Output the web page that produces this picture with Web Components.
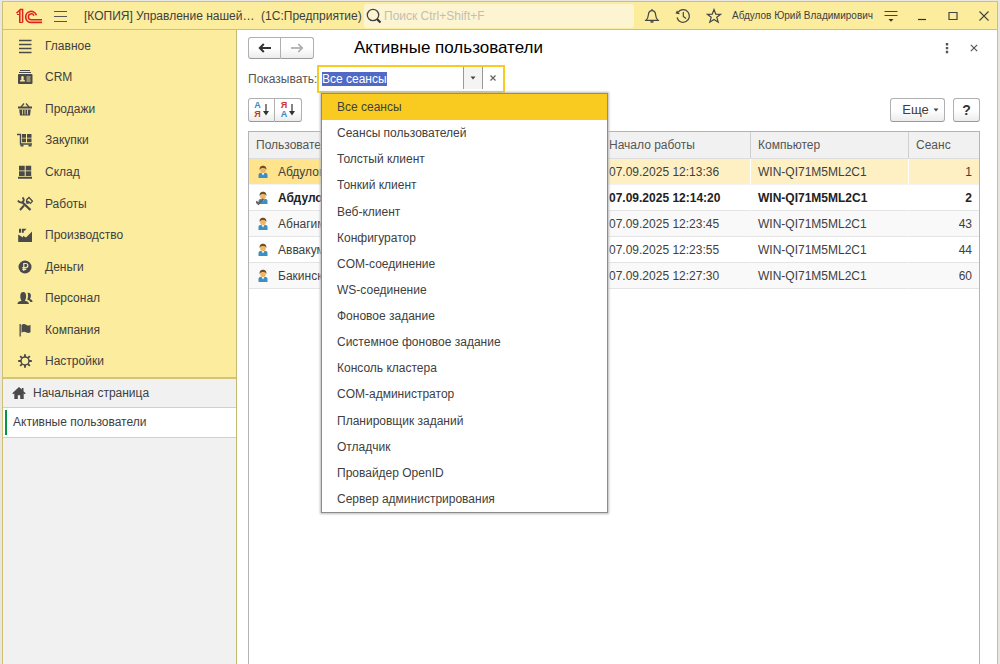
<!DOCTYPE html>
<html lang="ru">
<head>
<meta charset="utf-8">
<title>Активные пользователи</title>
<style>
html, body { margin: 0; height: 100%; }
body { font: 12px/16px "Liberation Sans", Arial, sans-serif; color: #404040; background: #e9e7e0; }
</style>
</head>
<body>
<app-window></app-window>

<script>
const ICONS = {
  logo: ['0 0 28 16', '<g fill="none" stroke="#e0231c"><path d="M1.5 5.2 4.8 2v12.5M7.6 14.5V1.6H5" stroke-width="1.5"/><path d="M2 6.5h2.5v8h3.1" stroke-width="1"/><path d="M21.4 7.200a5.500 5.500 0 1 0-5.200 7.200H27" stroke-width="1.700"/><path d="M19 7.800a2.900 2.900 0 1 0-2.800 3.900H27" stroke-width="1.500"/></g>'],
  burger: ['0 0 14 12', '<path d="M0 1.5h13M0 6.5h13M0 11.5h13" stroke="#555" fill="none"/>'],
  search: ['0 0 16 16', '<circle cx="7" cy="7" r="5.7" fill="none" stroke="#444" stroke-width="1.3"/><path d="m11 11 3.500 3.500" stroke="#333" stroke-width="2.200"/>'],
  bell: ['0 0 16 16', '<path d="M2 12.3c2-1.8 2.2-3 2.4-5.6C4.600 4 6 2.600 8 2.600s3.400 1.400 3.600 4.100c.2 2.600.4 3.800 2.400 5.600zM8 2.600V1" fill="none" stroke="#444" stroke-width="1.2"/><path d="M6.200 13.200h3.600a1.800 1.500 0 0 1-3.600 0z" fill="#333"/>'],
  history: ['0 0 16 16', '<path d="M3 4.300A6.300 6.300 0 1 1 2 9.500" fill="none" stroke="#444" stroke-width="1.200"/><path d="M8.300 4v4.500l2.800 2" fill="none" stroke="#444" stroke-width="1.200"/><path d="M.5 5.600 5 6.200 2 2.400z" fill="#444"/>'],
  star: ['0 0 16 16', '<path d="m8 1.500 1.800 4.600 4.900.2-3.900 3 1.400 4.900L8 11.400l-4.200 2.800 1.400-4.900-3.900-3 4.900-.2z" fill="none" stroke="#444" stroke-width="1.200"/>'],
  panel: ['0 0 14 14', '<path d="M.5 2.500h13M.5 6.500h13" stroke="#444" stroke-width="1.200"/><path d="M4.500 10h5L7 12.800z" fill="#333"/>'],
  minimize: ['0 0 12 12', '<path d="M2 9.500h8" stroke="#333" stroke-width="1.200"/>'],
  maximize: ['0 0 12 12', '<path d="M2 2.500h8v7H2z" fill="none" stroke="#444" stroke-width="1.200"/>'],
  close: ['0 0 12 12', '<path d="m1.500 1.500 9 9m0-9-9 9" stroke="#444" stroke-width="1.100"/>'],
  main: ['0 0 16 16', '<path d="M2 2.500h12.500M2 6.500h12.500M2 10.500h12.500M2 14.500h12.500" stroke="#4a4a4a" stroke-width="1.700"/>'],
  crm: ['0 0 16 16', '<path d="M3 1.500h10M2 3.500h12" stroke="#4a4a4a"/><rect x="1" y="5" width="14.500" height="10" rx="1" fill="#4a4a4a"/><path d="M3 12.500c0-1.600.8-1.700 1.600-2C3.800 8.500 4.200 7 5.500 7s1.700 1.500.9 3.500c.8.300 1.600.4 1.600 2z" fill="#f9e99c"/><path d="M9.500 8h4M9.500 10h4M9.500 12h4" stroke="#f9e99c" stroke-width=".9"/>'],
  sales: ['0 0 16 16', '<path d="M1 5.500h14v2H1zM2.200 8.500h11.600L13 14.500H3z" fill="#4a4a4a"/><path d="m4 6 3-3.500M12 6 9 2.500" stroke="#4a4a4a" stroke-width="1.200"/><path d="M5.500 8.500v5M8 8.500v5M10.500 8.500v5" stroke="#f9e99c" stroke-width=".8"/>'],
  purchases: ['0 0 16 16', '<path d="M0 2.500h3.500v9.500H15" fill="none" stroke="#4a4a4a" stroke-width="1.400"/><path d="M5 2h4v3.700H5zM10 2h4.500v3.700H10zM5 6.500h4v3.700H5zM10 6.500h4.500v3.700H10z" fill="#4a4a4a"/><path d="M3.500 12.500h3v2h-3zM11.500 12.500h3v2h-3z" fill="#4a4a4a"/>'],
  stock: ['0 0 16 16', '<path d="M2 1.800h5.700v4.700H2zM8.700 1.800h5.500v4.700H8.700zM2 7.300h5.700v4.700H2zM8.700 7.300h5.500v4.700H8.700zM1 12.800h14v1.900H1z" fill="#4a4a4a"/>'],
  works: ['0 0 16 16', '<path d="m5 6 8.500 8" stroke="#4a4a4a" stroke-width="2.400"/><path d="M1 4.500c1 2 3.500 2.800 5 1.200S6.600 2.500 5.500 1.500M3 14l4-4.500M9.500 7.500l2-2.500" stroke="#4a4a4a" stroke-width="1.900" fill="none"/><path d="M9.700 3.800 12 1.500l3.500 3.700-2 2.200-1-1-1.500.7-1.500-1.500z" fill="none" stroke="#4a4a4a" stroke-width="1.300"/>'],
  production: ['0 0 16 16', '<path d="M1.200 15V7.500L6 10.500V8.800l3 1.800 6-6V15z" fill="#4a4a4a"/><path d="M2 1.800h2.200v4H2zM5 1.800h4.500L7.800 3.800H6.800v2H5z" fill="#4a4a4a"/>'],
  money: ['0 0 16 16', '<circle cx="8" cy="8" r="6.500" fill="#4a4a4a"/><path d="M6.800 12V4.500h2a2 2 0 0 1 0 4.100H5.300M5.300 10.300h4" fill="none" stroke="#f9e99c" stroke-width="1.200"/>'],
  staff: ['0 0 16 16', '<path d="M.5 14c0-2.300 1.500-2.500 4-3.300C3.400 9 3.200 7.500 3.300 5.500 3.400 3 4.500 2 6.200 2S9 3 9.100 5.500c.1 2-.1 3.500-1.200 5.200 2.500.8 4 1 4 3.300z" fill="#4a4a4a"/><path d="M10.500 2.800c2.400-.5 3.600 1 3.400 3-.1 1.700-.5 2.500-1 3.200 1.700.6 2.600 1 2.600 3h-2.300c-.3-1.200-1.500-1.900-3-2.400 1-1.700 1.100-4.800.3-6.800z" fill="#4a4a4a"/>'],
  company: ['0 0 16 16', '<path d="M2.500 2h1.300v12.500H2.500z" fill="#4a4a4a"/><path d="M4.500 3c2-1.500 3.500-.8 5 0s2.500.8 4-.3v7.600c-1.500 1-2.700 1-4 .3s-3-1.300-5 .1z" fill="#4a4a4a"/>'],
  settings: ['0 0 16 16', '<circle cx="8" cy="8" r="4" fill="none" stroke="#4a4a4a" stroke-width="1.500"/><path d="M8 1.200V4M8 12v2.800M1.200 8H4M12 8h2.800M3.200 3.200l2 2M10.800 10.800l2 2M12.800 3.200l-2 2M5.200 10.800l-2 2" stroke="#4a4a4a" stroke-width="1.900"/>'],
  home: ['0 0 14 14', '<path d="M7 1 .3 7.300l.9 1L2.300 7.500V13h3.500V9.200h2.400V13h3.500V7.500l1.100.8.900-1L11.500 5.200V2H9.800v1.600z" fill="#4a4a4a"/>'],
  back: ['0 0 14 10', '<path d="M3 5h10" stroke="#333" stroke-width="2"/><path d="M5.800 1 1.800 5l4 4" fill="none" stroke="#333" stroke-width="2"/>'],
  forward: ['0 0 14 10', '<path d="M1 5h10" stroke="#aaa" stroke-width="1.700"/><path d="m8.200 1 4 4-4 4" fill="none" stroke="#aaa" stroke-width="1.700"/>'],
  dots: ['0 0 4 12', '<path d="M.8 1h2.400v2.400H.8zM.8 4.900h2.400v2.400H.8zM.8 8.800h2.400v2.400H.8z" fill="#555"/>'],
  cross: ['0 0 8 8', '<path d="m.8.8 6.400 6.400m0-6.400L.8 7.200" stroke="#555" stroke-width="1.200"/>'],
  clear: ['0 0 8 8', '<path d="m1.500 1.500 5 5m0-5-5 5" stroke="#666" stroke-width="1.300"/>'],
  caret: ['0 0 8 8', '<path d="M1.500 2.500h5L4 5.500z" fill="#444"/>'],
  sortArrow: ['0 0 6 12', '<path d="M3 0v10" stroke="#333" stroke-width="1.200"/><path d="M0 7h6L3 11.500z" fill="#333"/>'],
  user: ['0 0 14 14', '<path d="M2.500 13V10c0-1.500 1-2 2.500-2h4c1.500 0 2.500.5 2.500 2v3z" fill="#3c8fc4"/><path d="M5.500 8h3L7 10.500z" fill="#fff"/><ellipse cx="7" cy="5" rx="2.900" ry="3.300" fill="#efb667"/><path d="M3.600 5C3.300 1.800 5 .8 7 .8s3.700 1 3.400 4.200C9.800 3.500 8.500 3 7 3s-2.800.5-3.400 2z" fill="#6d4f2c"/>'],
};
ICONS.userSelf = [ICONS.user[0], ICONS.user[1] + '<path d="m0 10.500 2.500 2.300L7.500 8" fill="none" stroke="#666" stroke-width="2.200"/>'];

function define(name, css, html, setup) {
  const template = document.createElement('template');
  template.innerHTML = `<style>*{box-sizing:border-box}button{font:inherit;color:inherit;margin:0}${css}</style>` + html;
  customElements.define(name, class extends HTMLElement {
    constructor() {
      super();
      this.attachShadow({ mode: 'open' }).append(template.content.cloneNode(true));
    }
    connectedCallback() { if (setup) setup(this, this.shadowRoot); }
  });
}

define('ui-icon', ':host{display:inline-flex;flex:none;width:16px;height:16px}svg{width:100%;height:100%;display:block}', '<div style="display:contents"></div>', (el, root) => {
  const [box, body] = ICONS[el.getAttribute('name')];
  root.querySelector('div').innerHTML = `<svg viewBox="${box}" aria-hidden="true">${body}</svg>`;
});

define('title-bar', `
  :host{display:flex;align-items:center;gap:5px;height:28px;background:#fbec9e;border-bottom:1px solid #cfc077;padding-left:12px}
  button{flex:none;border:0;background:none;padding:0;display:flex;align-items:center;justify-content:center;width:26px;height:26px}
  .logo{width:28px}
  .burger ui-icon{width:14px;height:12px}
  .caption{margin-left:5px;white-space:pre;width:275px}
  label{flex:1;min-width:0;display:flex;align-items:center;height:24px;background:#fdf5d2;border-radius:3px;padding-left:2px;gap:2px}
  input{flex:1;min-width:0;border:0;background:none;padding:0;outline:0;font:inherit;color:#404040}
  input::placeholder{color:#c4beb0;opacity:1}
  .name{font-size:10px;white-space:nowrap}
  .win ui-icon{width:12px;height:12px}
  .panel ui-icon{width:14px;height:14px}`,
  `<ui-icon class="logo" name="logo"></ui-icon>
  <button class="burger" aria-label="Меню"><ui-icon name="burger"></ui-icon></button>
  <span class="caption">[КОПИЯ] Управление нашей…  (1С:Предприятие)</span>
  <label><ui-icon name="search"></ui-icon><input type="search" placeholder="Поиск Ctrl+Shift+F" aria-label="Поиск"></label>
  <button aria-label="Оповещения"><ui-icon name="bell"></ui-icon></button>
  <button aria-label="История"><ui-icon name="history"></ui-icon></button>
  <button aria-label="Избранное"><ui-icon name="star"></ui-icon></button>
  <span class="name">Абдулов Юрий Владимирович</span>
  <button class="panel" aria-label="Сервис"><ui-icon name="panel"></ui-icon></button>
  <button class="win" aria-label="Свернуть"><ui-icon name="minimize"></ui-icon></button>
  <button class="win" aria-label="Развернуть"><ui-icon name="maximize"></ui-icon></button>
  <button class="win" aria-label="Закрыть"><ui-icon name="close"></ui-icon></button>`);

define('nav-item', `
  :host{display:flex;flex:1}
  a{flex:1;display:flex;align-items:center;gap:12px;padding-left:14px;color:inherit;text-decoration:none}`,
  '<a href="#"><slot></slot></a>',
  (el, root) => {
    const icon = document.createElement('ui-icon');
    icon.setAttribute('name', el.getAttribute('icon'));
    root.querySelector('a').prepend(icon);
  });

define('side-bar', `
  :host{display:flex;flex-direction:column;flex:none;width:234px;background:#f1f1f1;border-right:1px solid #c5b870}
  nav{display:flex;flex-direction:column;height:349px;background:#fbec9e;border-bottom:2px solid #d2c47c}
  .tab{display:flex;align-items:center;height:30px;color:inherit;text-decoration:none;border-bottom:1px solid #d0d0d0}
  .home{gap:7px;padding-left:9px;height:29px}
  .home ui-icon{width:14px;height:14px}
  .active{background:#fff;padding:2px 0 2px 2px}
  .active span{border-left:2px solid #009646;height:25px;line-height:25px;padding-left:6px}`,
  `<nav>
    <nav-item icon="main">Главное</nav-item><nav-item icon="crm">CRM</nav-item>
    <nav-item icon="sales">Продажи</nav-item><nav-item icon="purchases">Закупки</nav-item>
    <nav-item icon="stock">Склад</nav-item><nav-item icon="works">Работы</nav-item>
    <nav-item icon="production">Производство</nav-item><nav-item icon="money">Деньги</nav-item>
    <nav-item icon="staff">Персонал</nav-item><nav-item icon="company">Компания</nav-item>
    <nav-item icon="settings">Настройки</nav-item>
  </nav>
  <a class="tab home" href="#"><ui-icon name="home"></ui-icon>Начальная страница</a>
  <a class="tab active" href="#" aria-current="page"><span>Активные пользователи</span></a>`);

define('list-option', `
  :host{flex:1;display:flex;align-items:center;padding-left:15px}
  :host([aria-selected=true]){background:#f9cb20}`, '<slot></slot>',
  el => el.setAttribute('role', 'option'));

define('session-filter', `
  :host{display:flex;align-items:center;position:relative;height:28px;color:#555}
  label{width:69px;white-space:nowrap}
  .box{display:flex;width:188px;height:28px;border:2px solid #f9cb20;background:#fff}
  input{flex:1;min-width:0;height:24px;border:0;outline:0;padding:0 0 0 3px;font:inherit;color:#404040;caret-color:transparent}
  input::selection{background:#5069c6;color:#fff}
  button{border:0;background:#fff;width:20px;height:22px;padding:0;display:flex;align-items:center;justify-content:center}
  .drop{background:#f4f4f4;border:solid #999;border-width:0 1px}
  ui-icon{width:8px;height:8px}
  .list{position:absolute;z-index:2;left:73px;top:28px;width:287px;height:420px;display:flex;flex-direction:column;background:#fff;border:1px solid #8c8c8c;box-shadow:0 0 2px 1px #bbb;color:#404040}`,
  `<label for="kind">Показывать:</label>
  <div class="box"><input id="kind" role="combobox" aria-expanded="true" value="Все сеансы">
  <button class="drop" aria-label="Выбрать"><ui-icon name="caret"></ui-icon></button>
  <button class="clear" aria-label="Очистить"><ui-icon name="clear"></ui-icon></button></div>
  <div class="list" role="listbox" aria-label="Показывать">
    <list-option aria-selected="true">Все сеансы</list-option>
    <list-option>Сеансы пользователей</list-option>
    <list-option>Толстый клиент</list-option>
    <list-option>Тонкий клиент</list-option>
    <list-option>Веб-клиент</list-option>
    <list-option>Конфигуратор</list-option>
    <list-option>COM-соединение</list-option>
    <list-option>WS-соединение</list-option>
    <list-option>Фоновое задание</list-option>
    <list-option>Системное фоновое задание</list-option>
    <list-option>Консоль кластера</list-option>
    <list-option>COM-администратор</list-option>
    <list-option>Планировщик заданий</list-option>
    <list-option>Отладчик</list-option>
    <list-option>Провайдер OpenID</list-option>
    <list-option>Сервер администрирования</list-option>
  </div>`,
  (el, root) => { const input = root.querySelector('input'); input.focus(); input.select(); });

define('sessions-table', `
  :host{display:block;flex:1;border:1px solid #b4b4b4;border-bottom:0;background:#fff;overflow:hidden}
  table{width:100%;border-collapse:separate;border-spacing:0;table-layout:fixed}
  th,td{padding:0 7px;text-align:left;white-space:nowrap;overflow:hidden}
  th{height:27px;font-weight:400;color:#555;background:#f1f1f1;border-right:1px solid #cfcfcf;border-bottom:1px solid #ddd}
  th:last-child,td:last-child{border-right:0}
  td{height:26px;border-bottom:1px solid #e4e4e4;border-right:1px solid transparent}
  tr:nth-child(odd) td{background:#f9f9f9}
  .selected td:nth-child(n){background:#fef0c3;border-right-color:#fff;border-bottom-color:#f2f2f2}
  .selected td:first-child{background:#ffe48d}
  .me td{font-weight:700;color:#222}
  td:last-child{text-align:right}
  td div{display:flex;align-items:center;gap:8px}
  ui-icon{width:14px;height:14px}
  .start{width:149px}.pc{width:158px}.no{width:70px}`,
  `<table><thead><tr><th>Пользователь</th><th class="start">Начало работы</th><th class="pc">Компьютер</th><th class="no">Сеанс</th></tr></thead><tbody></tbody></table>`,
  (el, root) => {
    const rows = [
      ['Абдулов', '07.09.2025 12:13:36', 1, 'selected'],
      ['Абдулов', '07.09.2025 12:14:20', 2, 'me'],
      ['Абнагим', '07.09.2025 12:23:45', 43, ''],
      ['Аввакум', '07.09.2025 12:23:55', 44, ''],
      ['Бакинск', '07.09.2025 12:27:30', 60, ''],
    ];
    root.querySelector('tbody').innerHTML = rows.map(([name, time, no, cls]) =>
      `<tr class="${cls}"><td><div><ui-icon name="${cls === 'me' ? 'userSelf' : 'user'}"></ui-icon>${name}</div></td><td>${time}</td><td>WIN-QI71M5ML2C1</td><td>${no}</td></tr>`).join('');
  });

define('users-form', `
  :host{flex:1;min-width:0;display:flex;flex-direction:column;background:#fff;padding:7px 17px 0 11px}
  button{height:24px;padding:0;border:1px solid #b0b0b0;border-bottom-color:#999;border-radius:3px;background:linear-gradient(#fff 50%,#ececec);display:flex;align-items:center;justify-content:center}
  header,.bar{display:flex;align-items:center}
  header{height:22px}
  .group{display:flex}
  .group button:first-child{border-radius:3px 0 0 3px}
  .group button:last-child{border-radius:0 3px 3px 0;border-left:0}
  .nav button{width:33px;height:22px}
  .nav ui-icon{width:14px;height:10px}
  h1{margin:0 0 0 40px;font:17px/20px "Liberation Sans",Arial,sans-serif;color:#000;flex:1}
  .plain{border:0;background:none;width:27px}
  .plain .dots{width:4px;height:12px}
  .plain .x{width:8px;height:8px}
  header .plain:last-child{width:13px;margin-left:7px}
  session-filter{margin-top:6px}
  .bar{margin:5px 0 9px;gap:8px;height:24px}
  .bar .group{flex:1}
  .sort{width:27px;gap:2px}
  .sort ui-icon{width:6px;height:12px}
  .pair{display:flex;flex-direction:column;font:bold 9px/9px "Liberation Sans",Arial,sans-serif}
  .a{color:#3a88c0}.z{color:#c33}
  .more{width:55px;gap:3px;font-size:13px;padding-left:7px}
  .more ui-icon{width:8px;height:8px}
  .help{width:27px;font-size:14px;font-weight:700;color:#333}`,
  `<header>
    <div class="group nav"><button aria-label="Назад"><ui-icon name="back"></ui-icon></button><button aria-label="Вперед"><ui-icon name="forward"></ui-icon></button></div>
    <h1>Активные пользователи</h1>
    <button class="plain" aria-label="Действия"><ui-icon class="dots" name="dots"></ui-icon></button>
    <button class="plain" aria-label="Закрыть"><ui-icon class="x" name="cross"></ui-icon></button>
  </header>
  <session-filter></session-filter>
  <div class="bar">
    <div class="group">
      <button class="sort" aria-label="По возрастанию"><span class="pair"><span class="a">А</span><span class="z">Я</span></span><ui-icon name="sortArrow"></ui-icon></button>
      <button class="sort" aria-label="По убыванию"><span class="pair"><span class="z">Я</span><span class="a">А</span></span><ui-icon name="sortArrow"></ui-icon></button>
    </div>
    <button class="more">Еще<ui-icon name="caret"></ui-icon></button>
    <button class="help">?</button>
  </div>
  <sessions-table></sessions-table>`);

define('app-window', `
  :host{display:flex;flex-direction:column;height:100vh;box-sizing:border-box;padding:1px 2px 0 2px}
  .frame{flex:1;display:flex;flex-direction:column;min-height:0;border:1px solid #cfc077;border-bottom:0}
  .body{flex:1;display:flex;min-height:0}`,
  '<div class="frame"><title-bar></title-bar><div class="body"><side-bar></side-bar><users-form></users-form></div></div>');
</script>
</body>
</html>
